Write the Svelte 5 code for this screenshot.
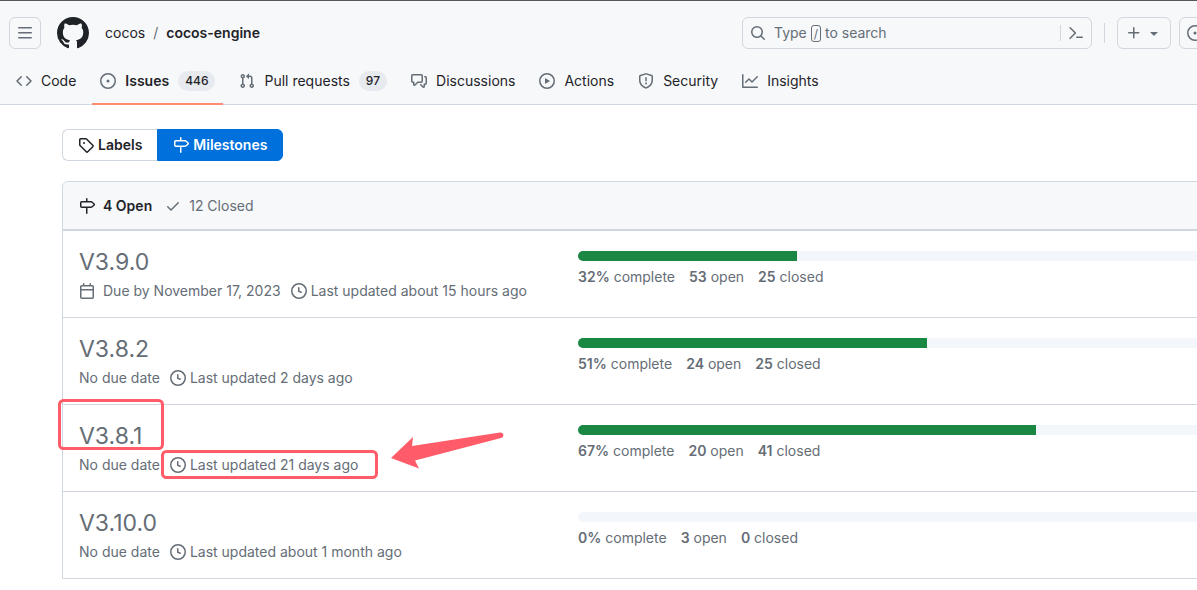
<script>
	const icons = {
		menu: "M1 2.75A.75.75 0 0 1 1.75 2h12.5a.75.75 0 0 1 0 1.5H1.75A.75.75 0 0 1 1 2.75Zm0 5A.75.75 0 0 1 1.75 7h12.5a.75.75 0 0 1 0 1.5H1.75A.75.75 0 0 1 1 7.75ZM1.75 12h12.5a.75.75 0 0 1 0 1.5H1.75a.75.75 0 0 1 0-1.5Z",
		github: "M8 0c4.42 0 8 3.58 8 8a8.013 8.013 0 0 1-5.45 7.59c-.4.08-.55-.17-.55-.38 0-.27.01-1.13.01-2.2 0-.75-.25-1.23-.54-1.48 1.78-.2 3.65-.88 3.65-3.95 0-.88-.31-1.59-.82-2.15.08-.2.36-1.02-.08-2.12 0 0-.67-.22-2.2.82-.64-.18-1.32-.27-2-.27-.68 0-1.36.09-2 .27-1.53-1.03-2.2-.82-2.2-.82-.44 1.1-.16 1.92-.08 2.12-.51.56-.82 1.28-.82 2.15 0 3.06 1.86 3.75 3.64 3.95-.23.2-.44.55-.51 1.07-.46.21-1.61.55-2.33-.66-.15-.24-.6-.83-1.23-.82-.67.01-.27.38.01.53.34.19.73.9.82 1.13.16.45.68 1.31 2.69.94 0 .67.01 1.3.01 1.49 0 .21-.15.45-.55.38A7.995 7.995 0 0 1 0 8c0-4.42 3.58-8 8-8Z",
		code: "m11.28 3.22 4.25 4.25a.75.75 0 0 1 0 1.06l-4.25 4.25a.749.749 0 0 1-1.275-.326.749.749 0 0 1 .215-.734L13.94 8l-3.72-3.72a.749.749 0 0 1 .326-1.275.749.749 0 0 1 .734.215Zm-6.56 0a.751.751 0 0 1 1.042.018.751.751 0 0 1 .018 1.042L2.06 8l3.72 3.72a.749.749 0 0 1-.326 1.275.749.749 0 0 1-.734-.215L.47 8.53a.75.75 0 0 1 0-1.06Z",
		issue: "M8 9.5a1.5 1.5 0 1 0 0-3 1.5 1.5 0 0 0 0 3Z M8 0a8 8 0 1 1 0 16A8 8 0 0 1 8 0ZM1.5 8a6.5 6.5 0 1 0 13 0 6.5 6.5 0 0 0-13 0Z",
		pull: "M1.5 3.25a2.25 2.25 0 1 1 3 2.122v5.256a2.251 2.251 0 1 1-1.5 0V5.372A2.25 2.25 0 0 1 1.5 3.25Zm5.677-.177L9.573.677A.25.25 0 0 1 10 .854V2.5h1A2.5 2.5 0 0 1 13.5 5v5.628a2.251 2.251 0 1 1-1.5 0V5a1 1 0 0 0-1-1h-1v1.646a.25.25 0 0 1-.427.177L7.177 3.427a.25.25 0 0 1 0-.354ZM3.75 2.5a.75.75 0 1 0 0 1.5.75.75 0 0 0 0-1.5Zm0 9.5a.75.75 0 1 0 0 1.5.75.75 0 0 0 0-1.5Zm8.25.75a.75.75 0 1 0 1.5 0 .75.75 0 0 0-1.5 0Z",
		discussion: "M1.75 1h8.5c.966 0 1.75.784 1.75 1.75v5.5A1.75 1.75 0 0 1 10.25 10H7.061l-2.574 2.573A1.458 1.458 0 0 1 2 11.543V10h-.25A1.75 1.75 0 0 1 0 8.25v-5.5C0 1.784.784 1 1.75 1ZM1.5 2.75v5.5c0 .138.112.25.25.25h1a.75.75 0 0 1 .75.75v2.19l2.72-2.72a.749.749 0 0 1 .53-.22h3.5a.25.25 0 0 0 .25-.25v-5.5a.25.25 0 0 0-.25-.25h-8.5a.25.25 0 0 0-.25.25Zm13 2a.25.25 0 0 0-.25-.25h-.5a.75.75 0 0 1 0-1.5h.5c.966 0 1.75.784 1.75 1.75v5.5A1.75 1.75 0 0 1 14.25 12H14v1.543a1.458 1.458 0 0 1-2.487 1.03L9.22 12.28a.749.749 0 0 1 .326-1.275.749.749 0 0 1 .734.215l2.22 2.22v-2.19a.75.75 0 0 1 .75-.75h1a.25.25 0 0 0 .25-.25Z",
		play: "M8 0a8 8 0 1 1 0 16A8 8 0 0 1 8 0ZM1.5 8a6.5 6.5 0 1 0 13 0 6.5 6.5 0 0 0-13 0Zm4.879-2.773 4.264 2.559a.25.25 0 0 1 0 .428l-4.264 2.559A.25.25 0 0 1 6 10.559V5.442a.25.25 0 0 1 .379-.215Z",
		shield: "M7.467.133a1.748 1.748 0 0 1 1.066 0l5.25 1.68A1.75 1.75 0 0 1 15 3.48V7c0 1.566-.32 3.182-1.303 4.682-.983 1.498-2.585 2.813-5.032 3.855a1.697 1.697 0 0 1-1.33 0c-2.447-1.042-4.049-2.357-5.032-3.855C1.32 10.182 1 8.566 1 7V3.48a1.75 1.75 0 0 1 1.217-1.667Zm.61 1.429a.25.25 0 0 0-.153 0l-5.25 1.68a.25.25 0 0 0-.174.238V7c0 1.358.275 2.666 1.057 3.86.784 1.194 2.121 2.34 4.366 3.297a.196.196 0 0 0 .154 0c2.245-.956 3.582-2.104 4.366-3.298C13.225 9.666 13.5 8.36 13.5 7V3.48a.251.251 0 0 0-.174-.237l-5.25-1.68ZM8.75 4.75v3a.75.75 0 0 1-1.5 0v-3a.75.75 0 0 1 1.5 0ZM9 10.5a1 1 0 1 1-2 0 1 1 0 0 1 2 0Z",
		graph: "M1.5 1.75V13.5h13.75a.75.75 0 0 1 0 1.5H.75a.75.75 0 0 1-.75-.75V1.75a.75.75 0 0 1 1.5 0Zm14.28 2.53-5.25 5.25a.75.75 0 0 1-1.06 0L7 7.06 4.28 9.78a.751.751 0 0 1-1.042-.018.751.751 0 0 1-.018-1.042l3.25-3.25a.75.75 0 0 1 1.06 0L10 7.94l4.72-4.72a.751.751 0 0 1 1.042.018.751.751 0 0 1 .018 1.042Z",
		search: "M10.68 11.74a6 6 0 0 1-7.922-8.982 6 6 0 0 1 8.982 7.922l3.04 3.04a.749.749 0 0 1-.326 1.275.749.749 0 0 1-.734-.215ZM11.5 7a4.499 4.499 0 1 0-8.997 0A4.499 4.499 0 0 0 11.5 7Z",
		prompt: "m6.354 8.04-4.773 4.773a.75.75 0 1 0 1.061 1.06L7.945 8.57a.75.75 0 0 0 0-1.06L2.642 2.206a.75.75 0 0 0-1.06 1.061L6.353 8.04ZM8.75 11.5a.75.75 0 0 0 0 1.5h5.5a.75.75 0 0 0 0-1.5h-5.5Z",
		plus: "M7.75 2a.75.75 0 0 1 .75.75V7h4.25a.75.75 0 0 1 0 1.5H8.5v4.25a.75.75 0 0 1-1.5 0V8.5H2.75a.75.75 0 0 1 0-1.5H7V2.75A.75.75 0 0 1 7.75 2Z",
		caret: "m4.427 7.427 3.396 3.396a.25.25 0 0 0 .354 0l3.396-3.396A.25.25 0 0 0 11.396 7H4.604a.25.25 0 0 0-.177.427Z",
		tag: "M1 7.775V2.75C1 1.784 1.784 1 2.75 1h5.025c.464 0 .91.184 1.238.513l6.25 6.25a1.75 1.75 0 0 1 0 2.474l-5.026 5.026a1.75 1.75 0 0 1-2.474 0l-6.25-6.25A1.752 1.752 0 0 1 1 7.775Zm1.5 0c0 .066.026.13.073.177l6.25 6.25a.25.25 0 0 0 .354 0l5.025-5.025a.25.25 0 0 0 0-.354l-6.25-6.25a.25.25 0 0 0-.177-.073H2.75a.25.25 0 0 0-.25.25ZM6 5a1 1 0 1 1 0 2 1 1 0 0 1 0-2Z",
		milestone: "M7.75 0a.75.75 0 0 1 .75.75V3h3.634c.414 0 .814.147 1.13.414l2.07 1.75a1.75 1.75 0 0 1 0 2.672l-2.07 1.75a1.75 1.75 0 0 1-1.13.414H8.5v5.25a.75.75 0 0 1-1.5 0V10H2.75A1.75 1.75 0 0 1 1 8.25v-3.5C1 3.784 1.784 3 2.75 3H7V.75A.75.75 0 0 1 7.75 0Zm4.384 8.5a.25.25 0 0 0 .161-.06l2.07-1.75a.248.248 0 0 0 0-.38l-2.07-1.75a.25.25 0 0 0-.161-.06H2.75a.25.25 0 0 0-.25.25v3.5c0 .138.112.25.25.25h9.384Z",
		check: "M13.78 4.22a.75.75 0 0 1 0 1.06l-7.25 7.25a.75.75 0 0 1-1.06 0L2.22 9.28a.751.751 0 0 1 .018-1.042.751.751 0 0 1 1.042-.018L6 10.94l6.72-6.72a.75.75 0 0 1 1.06 0Z",
		calendar: "M4.75 0a.75.75 0 0 1 .75.75V2h5V.75a.75.75 0 0 1 1.5 0V2h1.25c.966 0 1.75.784 1.75 1.75v10.5A1.75 1.75 0 0 1 13.25 16H2.75A1.75 1.75 0 0 1 1 14.25V3.75C1 2.784 1.784 2 2.75 2H4V.75A.75.75 0 0 1 4.75 0ZM2.5 7.5v6.75c0 .138.112.25.25.25h10.5a.25.25 0 0 0 .25-.25V7.5Zm10.75-4H2.75a.25.25 0 0 0-.25.25V6h11V3.75a.25.25 0 0 0-.25-.25Z",
		clock: "M8 0a8 8 0 1 1 0 16A8 8 0 0 1 8 0ZM1.5 8a6.5 6.5 0 1 0 13 0 6.5 6.5 0 0 0-13 0Zm7-3.25v2.992l2.028.812a.75.75 0 0 1-.557 1.392l-2.5-1A.751.751 0 0 1 7 8.25v-3.5a.75.75 0 0 1 1.5 0Z",
	};

	const tabs = [
		{ label: "Code", icon: "code" },
		{ label: "Issues", icon: "issue", count: 446, current: true },
		{ label: "Pull requests", icon: "pull", count: 97 },
		{ label: "Discussions", icon: "discussion" },
		{ label: "Actions", icon: "play" },
		{ label: "Security", icon: "shield" },
		{ label: "Insights", icon: "graph" },
	];

	const milestones = [
		{ title: "V3.9.0", due: "November 17, 2023", updated: "about 15 hours ago", percent: 32, open: 53, closed: 25 },
		{ title: "V3.8.2", updated: "2 days ago", percent: 51, open: 24, closed: 25 },
		{ title: "V3.8.1", updated: "21 days ago", percent: 67, open: 20, closed: 41, marked: true },
		{ title: "V3.10.0", updated: "about 1 month ago", percent: 0, open: 3, closed: 0 },
	];
</script>

{#snippet icon(name, size = 16)}
	<svg class="icon" viewBox="0 0 16 16" width={size} height={size} aria-hidden="true">
		<path fill-rule="evenodd" d={icons[name]} />
	</svg>
{/snippet}

<div class="page">
	<header>
		<div class="topbar">
			<button class="square" aria-label="Open menu">{@render icon("menu")}</button>
			<a class="logo" href="#home" aria-label="Homepage">{@render icon("github", 32)}</a>
			<nav class="crumbs" aria-label="Repository">
				<a href="#cocos">cocos</a>
				<span>/</span>
				<a class="repo" href="#repo">cocos-engine</a>
			</nav>
			<div class="search">
				{@render icon("search")}
				<label for="search">Type <kbd>/</kbd> to search</label>
				<input id="search" type="text">
				<button class="palette" aria-label="Command palette">{@render icon("prompt")}</button>
			</div>
			<span class="divider"></span>
			<button class="create" aria-label="Create new">{@render icon("plus")}{@render icon("caret")}</button>
			<button class="square issues" aria-label="Your issues">{@render icon("issue")}</button>
		</div>
		<nav class="tabs" aria-label="Sections">
			{#each tabs as tab}
				<a href="#{tab.icon}" class:current={tab.current}>
					{@render icon(tab.icon)}
					<span>{tab.label}</span>
					{#if tab.count}<span class="count">{tab.count}</span>{/if}
				</a>
			{/each}
		</nav>
	</header>

	<main>
		<div class="subnav">
			<a href="#labels">{@render icon("tag")}Labels</a>
			<a class="selected" href="#milestones">{@render icon("milestone")}Milestones</a>
		</div>

		<section class="list">
			<div class="list-head">
				<a class="selected" href="#open">{@render icon("milestone")}4 Open</a>
				<a href="#closed">{@render icon("check")}12 Closed</a>
			</div>
			{#each milestones as m}
				<article>
					<div class="info">
						<h2><a href="#{m.title}">{m.title}</a></h2>
						<p>
							{#if m.due}
								<span class="due">{@render icon("calendar")}Due by {m.due}</span>
							{:else}
								<span>No due date</span>
							{/if}
							<span class="updated">{@render icon("clock")}Last updated {m.updated}</span>
						</p>
					</div>
					<div class="progress">
						<div class="bar"><div class="fill" style:width="{m.percent}%"></div></div>
						<p>
							<span><b>{m.percent}%</b> complete</span>
							<span><b>{m.open}</b> open</span>
							<span><b>{m.closed}</b> closed</span>
						</p>
					</div>
					{#if m.marked}
						<svg class="marks" viewBox="0 0 460 90" width="460" height="90" aria-hidden="true">
							<rect x="7.5" y="6.5" width="103" height="48" rx="4" />
							<rect x="110.5" y="57.5" width="214" height="26" rx="4" />
							<path d="M339 64 361 43 360 52 448 38.500Q451 38 451.500 41 451.500 43.500 449 44L363 66.500 367 74.500Z" />
						</svg>
					{/if}
				</article>
			{/each}
		</section>
	</main>
</div>

<style>
	:global(body) {
		margin: 0;
		background: #fff;
	}
	.page {
		overflow: hidden;
		font-family: Inter, "Liberation Sans", sans-serif;
		font-size: 14px;
		line-height: 20px;
		color: #1f2328;
	}
	a {
		color: inherit;
		text-decoration: none;
	}
	button {
		font: inherit;
		color: #656d76;
		background: none;
		cursor: pointer;
	}
	p, h2 {
		margin: 0;
	}
	.icon {
		display: block;
		flex: none;
		fill: currentColor;
	}

	header {
		background: #f6f8fa;
		border-top: 1px solid #57565b;
		border-bottom: 1px solid #d0d7de;
	}
	.topbar {
		display: flex;
		align-items: center;
		padding: 16px 0 9px 9px;
	}
	.square, .create {
		box-sizing: border-box;
		display: flex;
		flex: none;
		align-items: center;
		justify-content: center;
		width: 32px;
		height: 32px;
		padding: 0;
		border: 1px solid #d0d7de;
		border-radius: 6px;
	}
	.create {
		gap: 4px;
		width: 54px;
	}
	.issues {
		margin: 0 -14px 0 8px;
	}
	.logo {
		margin: 0 16px;
	}
	.crumbs {
		display: flex;
		gap: 8px;
	}
	.crumbs span {
		color: #656d76;
	}
	.repo {
		font-weight: 600;
	}
	.search {
		box-sizing: border-box;
		display: flex;
		align-items: center;
		width: 350px;
		height: 32px;
		margin-left: auto;
		padding: 0 7px;
		border: 1px solid #d0d7de;
		border-radius: 6px;
		color: #656d76;
	}
	.search label {
		margin-left: 8px;
		white-space: nowrap;
	}
	kbd {
		padding: 0 2px;
		border: 1px solid #656d76;
		border-radius: 3px;
		font: inherit;
		font-size: 12px;
	}
	.search input {
		flex: 1;
		min-width: 0;
		border: 0;
		outline: 0;
		background: none;
		font: inherit;
	}
	.palette {
		padding: 0 0 0 7px;
		border: 0;
		border-left: 1px solid #d0d7de;
	}
	.divider {
		width: 1px;
		height: 20px;
		margin: 0 12px;
		background: #d0d7de;
	}

	.tabs {
		display: flex;
		gap: 8px;
		padding: 0 8px;
	}
	.tabs a {
		display: flex;
		align-items: center;
		gap: 9px;
		height: 45px;
		padding: 0 8px;
		border-bottom: 2px solid transparent;
		margin-bottom: -1px;
		white-space: nowrap;
	}
	.tabs .icon {
		color: #656d76;
	}
	.tabs .current {
		border-color: #fd8c73;
		font-weight: 600;
	}
	.count {
		padding: 0 7px;
		border-radius: 10px;
		background: #e7eaee;
		font-size: 12px;
		font-weight: 500;
	}

	main {
		padding: 24px 0 0 62px;
	}
	.subnav {
		display: flex;
		font-weight: 600;
	}
	.subnav a {
		display: flex;
		align-items: center;
		gap: 4px;
		padding: 5px 15px;
		border: 1px solid #d0d7de;
		border-right: 0;
		border-radius: 6px 0 0 6px;
	}
	.subnav .selected {
		border: 1px solid #0070dc;
		border-radius: 0 6px 6px 0;
		background: #0070dc;
		color: #fff;
	}

	/* the list is wider than the window and runs off its right edge */
	.list {
		margin: 20px -82px 0 0;
		border: 1px solid #d0d7de;
		border-radius: 6px 6px 0 0;
	}
	.list-head {
		display: flex;
		gap: 13px;
		padding: 14px 16px 13px;
		border-bottom: 1px solid #d0d7de;
		border-radius: 6px 6px 0 0;
		background: #f6f8fa;
		color: #656d76;
	}
	.list-head a {
		display: flex;
		align-items: center;
		gap: 8px;
	}
	.list-head .selected {
		font-weight: 600;
		color: #1f2328;
	}
	article {
		position: relative;
		display: flex;
		padding: 15px 16px 16px;
		border-top: 1px solid #d0d7de;
		color: #656d76;
	}
	.info {
		flex: none;
		width: 499px;
	}
	h2 {
		font-size: 23px;
		font-weight: 400;
		line-height: 32px;
	}
	.info p {
		display: flex;
		gap: 10px;
		padding-top: 3px;
	}
	.due, .updated {
		display: flex;
		align-items: center;
		gap: 4px;
	}
	.due {
		gap: 8px;
	}
	.progress {
		flex: 1;
		padding-top: 5px;
	}
	.bar {
		height: 10px;
		overflow: hidden;
		border-radius: 6px;
		background: #f3f6fa;
	}
	.fill {
		height: 100%;
		background: #1a8742;
	}
	.progress p {
		display: flex;
		gap: 14px;
		padding-top: 6px;
	}
	b {
		font-weight: 600;
	}

	/* pen marks drawn over the highlighted milestone */
	.marks {
		position: absolute;
		top: -11px;
		left: -11px;
		pointer-events: none;
	}
	.marks rect {
		fill: none;
		stroke: #ff5b68;
		stroke-width: 3;
	}
	.marks path {
		fill: #ff5b68;
	}
</style>
